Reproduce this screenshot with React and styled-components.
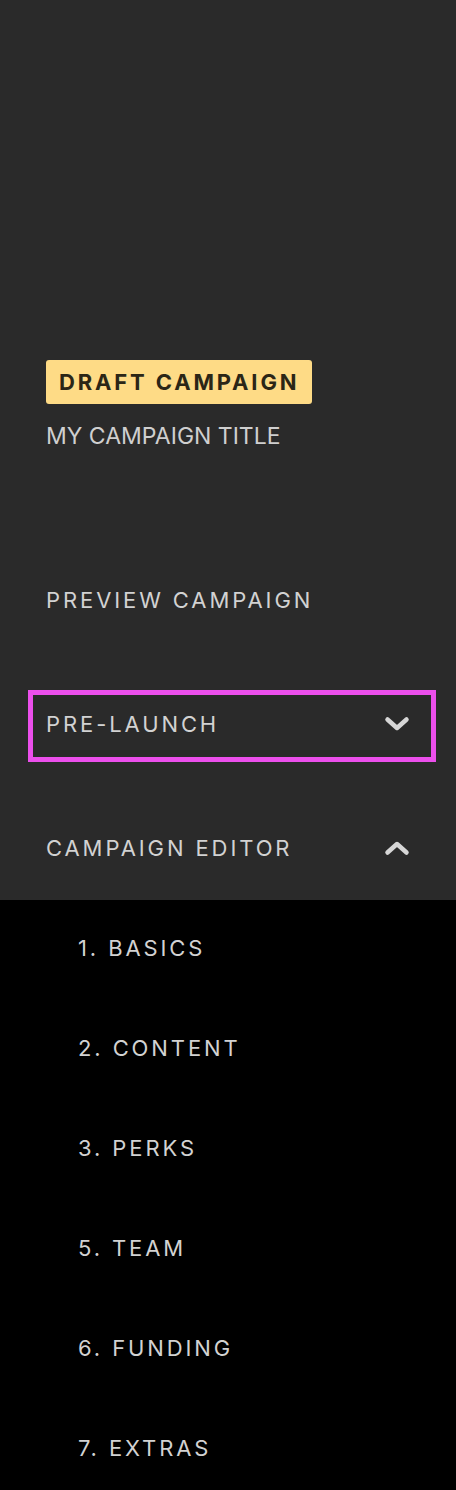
import React from 'react'
import styled, { createGlobalStyle } from 'styled-components'

const GlobalStyle = createGlobalStyle`
  body {
    margin: 0;
    background: #000;
    font-family: Inter, "Liberation Sans", sans-serif;
  }
`

const Sidebar = styled.nav`
  width: 456px;
  min-height: 1490px;
  background: #000;
  overflow: hidden;
`

const Header = styled.div`
  background: #2a2a2a;
  padding: 360px 46px 0;
`

const Badge = styled.span`
  display: inline-flex;
  align-items: center;
  height: 44px;
  padding: 0 13px;
  border-radius: 3px;
  background: #fedb86;
  color: #2b2616;
  font-size: 22px;
  font-weight: 700;
  letter-spacing: 2.85px;
`

const Title = styled.div`
  margin-top: 20px;
  height: 24px;
  line-height: 24px;
  color: #cfcfcf;
  font-size: 23px;
  letter-spacing: 0;
`

const MainList = styled.ul`
  list-style: none;
  margin: 100px 0 0;
  padding: 0;
  display: flex;
  flex-direction: column;
  gap: 20px;
`

const MainItem = styled.li`
  position: relative;
  height: 104px;
  display: flex;
  align-items: center;
  justify-content: space-between;
  color: #d2d2d2;
  font-size: 22px;
  letter-spacing: 2.9px;

  ${(p) =>
    p.marked &&
    `
    &::after {
      content: '';
      position: absolute;
      left: -18px;
      right: -26px;
      top: 18px;
      bottom: 14px;
      border: 5px solid #ec4fec;
      pointer-events: none;
    }
  `}
`

const Chevron = ({ up }) => (
  <svg width="26" height="16" viewBox="0 0 26 16" aria-hidden="true">
    <path
      d={up ? 'M3.5 12.5 L13 4 L22.5 12.5' : 'M3.5 3.5 L13 12 L22.5 3.5'}
      fill="none"
      stroke="#d6d6d6"
      strokeWidth="4.5"
      strokeLinecap="round"
      strokeLinejoin="round"
    />
  </svg>
)

const SubList = styled.ul`
  list-style: none;
  margin: 0;
  padding: 0;
  background: #000;
`

const SubItem = styled.li`
  height: 100px;
  box-sizing: border-box;
  padding: 0 0 4px 78px;
  display: flex;
  align-items: center;
  color: #d2d2d2;
  font-size: 22px;
  letter-spacing: 2.9px;
`

const steps = ['1. BASICS', '2. CONTENT', '3. PERKS', '5. TEAM', '6. FUNDING', '7. EXTRAS']

export default function App() {
  return (
    <>
      <GlobalStyle />
      <Sidebar>
        <Header>
          <Badge>DRAFT CAMPAIGN</Badge>
          <Title>MY CAMPAIGN TITLE</Title>
          <MainList>
            <MainItem>PREVIEW CAMPAIGN</MainItem>
            <MainItem marked>
              PRE-LAUNCH
              <Chevron />
            </MainItem>
            <MainItem>
              CAMPAIGN EDITOR
              <Chevron up />
            </MainItem>
          </MainList>
        </Header>
        <SubList>
          {steps.map((s) => (
            <SubItem key={s}>{s}</SubItem>
          ))}
        </SubList>
      </Sidebar>
    </>
  )
}
